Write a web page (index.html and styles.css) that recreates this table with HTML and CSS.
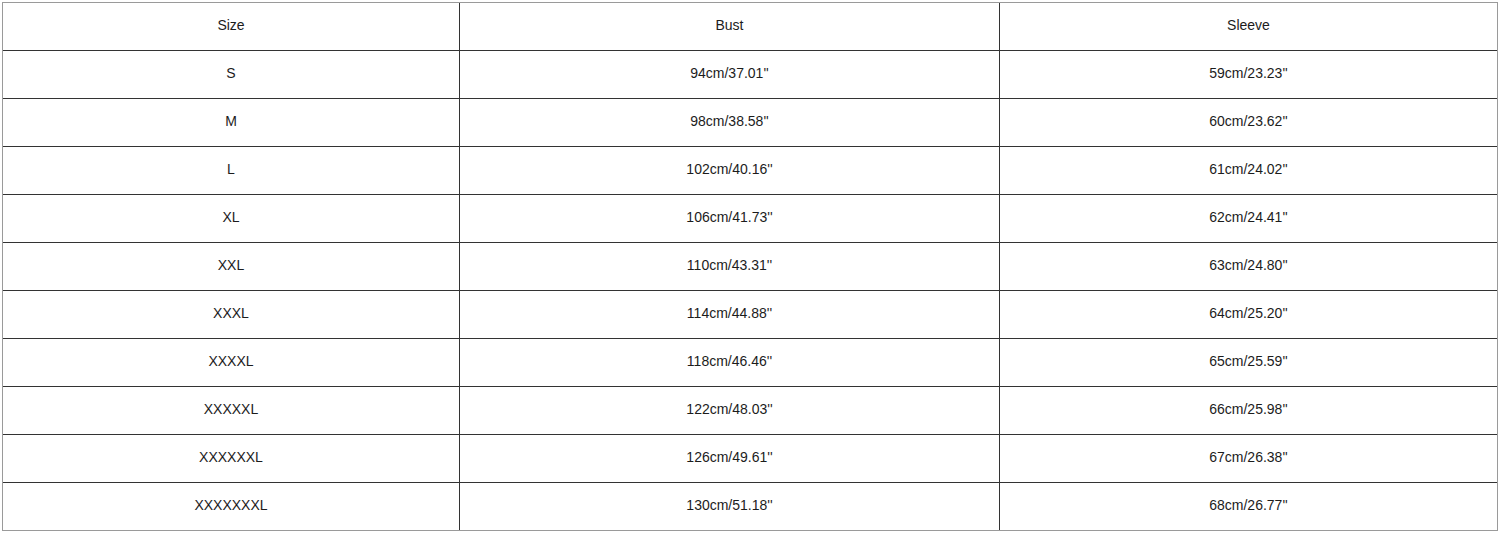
FILE: index.html
```html
<!DOCTYPE html>
<html>
<head>
<meta charset="utf-8">
<link rel="stylesheet" href="styles.css">
</head>
<body>
<table class="size-table">
  <colgroup>
    <col class="col-size">
    <col class="col-bust">
    <col class="col-sleeve">
  </colgroup>
  <tr><td>Size</td><td>Bust</td><td>Sleeve</td></tr>
  <tr><td>S</td><td>94cm/37.01''</td><td>59cm/23.23''</td></tr>
  <tr><td>M</td><td>98cm/38.58''</td><td>60cm/23.62''</td></tr>
  <tr><td>L</td><td>102cm/40.16''</td><td>61cm/24.02''</td></tr>
  <tr><td>XL</td><td>106cm/41.73''</td><td>62cm/24.41''</td></tr>
  <tr><td>XXL</td><td>110cm/43.31''</td><td>63cm/24.80''</td></tr>
  <tr><td>XXXL</td><td>114cm/44.88''</td><td>64cm/25.20''</td></tr>
  <tr><td>XXXXL</td><td>118cm/46.46''</td><td>65cm/25.59''</td></tr>
  <tr><td>XXXXXL</td><td>122cm/48.03''</td><td>66cm/25.98''</td></tr>
  <tr><td>XXXXXXL</td><td>126cm/49.61''</td><td>67cm/26.38''</td></tr>
  <tr><td>XXXXXXXL</td><td>130cm/51.18''</td><td>68cm/26.77''</td></tr>
</table>
</body>
</html>
```
FILE: styles.css
```css
html, body {
  margin: 0;
  padding: 0;
  background: #ffffff;
}
body {
  padding: 2px 0 0 2px;
  font-family: "Liberation Sans", Arial, sans-serif;
}
.size-table {
  border-collapse: separate;
  border-spacing: 0;
  width: 1496px;
  table-layout: fixed;
  border: 1px solid #9a9a9a;
}
.col-size { width: 457px; }
.col-bust { width: 540px; }
.col-sleeve { width: 497px; }
.size-table td {
  height: 48px;
  padding: 0 0 4px 0;
  box-sizing: border-box;
  text-align: center;
  vertical-align: middle;
  font-size: 14px;
  line-height: 16px;
  color: #1c1c1c;
  border-right: 1px solid #333333;
  border-bottom: 1px solid #333333;
}
.size-table td:last-child {
  border-right: none;
}
.size-table tr:last-child td {
  border-bottom: none;
  height: 47px;
}
```
